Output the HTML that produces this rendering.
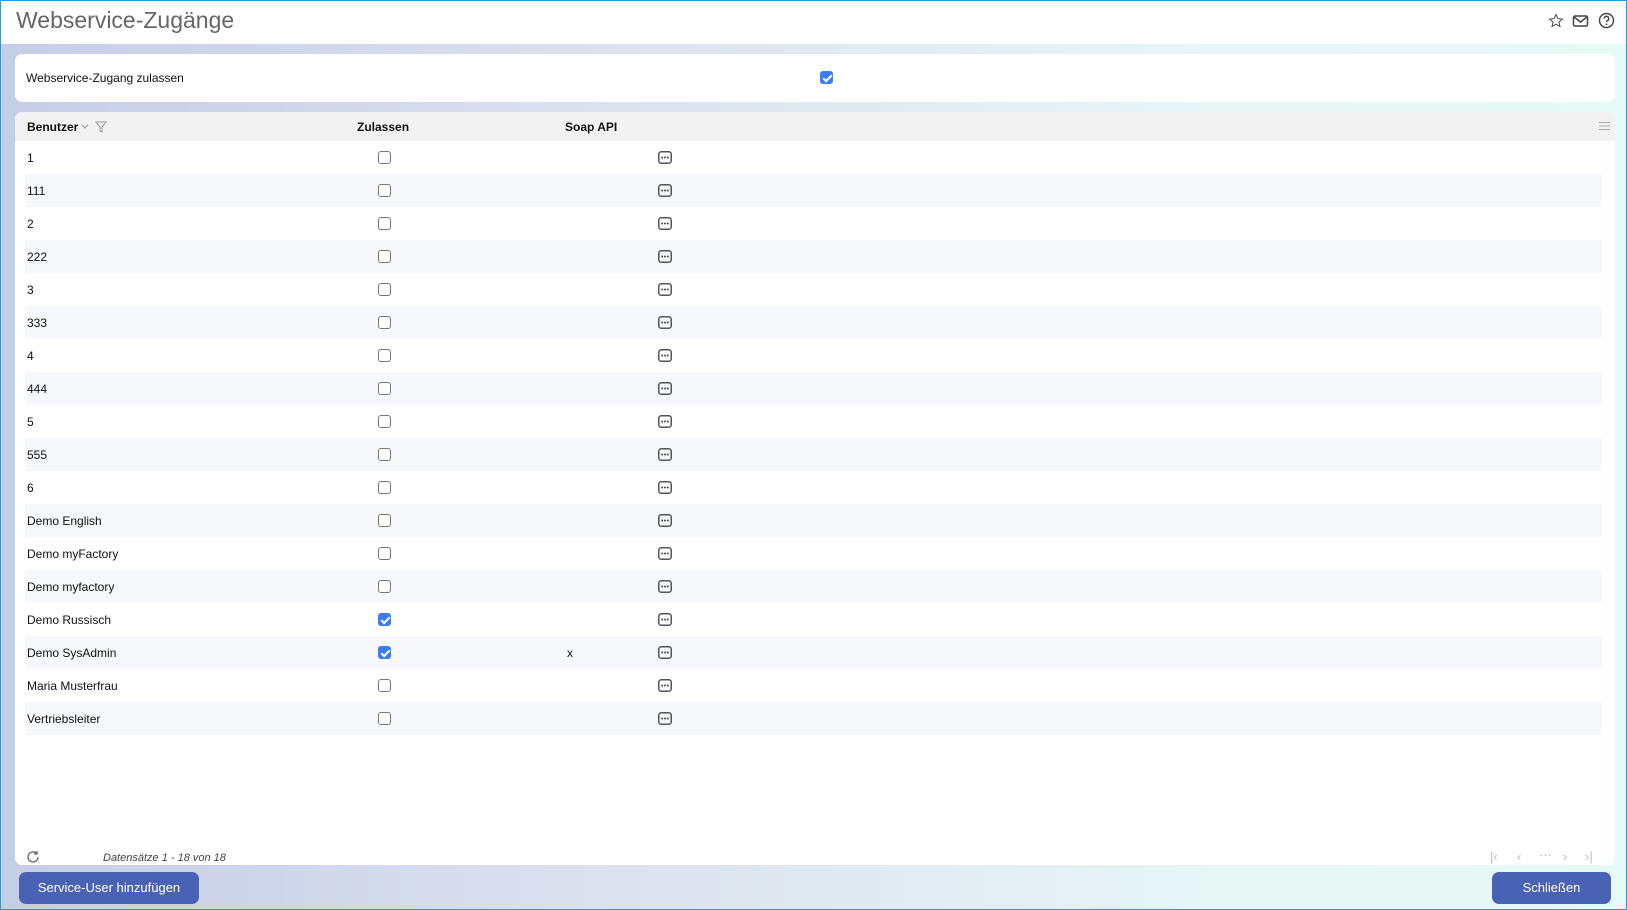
<!DOCTYPE html>
<html><head><meta charset="utf-8">
<style>
*{box-sizing:border-box;margin:0;padding:0}
body{width:1627px;height:910px;overflow:hidden;font-family:"Liberation Sans",sans-serif;color:#111;background:#fff}
.frame{position:absolute;left:0;top:0;width:1627px;height:910px;border:1px solid #1ea0e0;overflow:hidden}
.hdr{position:absolute;left:0;top:0;width:100%;height:43px;background:#fff}
.title{position:absolute;left:15px;top:6px;font-size:23px;color:#666}
.bg{position:absolute;left:0;top:43px;width:100%;height:867px;background:linear-gradient(90deg,#c6cde6 0%,#dde3ef 40%,#e8f6f6 75%,#e6faf6 100%)}
.card1{position:absolute;left:14px;top:53px;width:1600px;height:48px;background:#fff;border-radius:7px}
.card1 .lbl{position:absolute;left:11px;top:17px;font-size:12px}
.grid{position:absolute;left:14px;top:111px;width:1600px;height:753px;background:#fff;border-radius:7px;overflow:hidden}
.gh{position:absolute;left:0;top:0;width:100%;height:29px;background:#f2f2f2;font-weight:bold;font-size:12px}
.gh span{position:absolute;top:8px}
.row{position:absolute;left:10px;width:1577px;height:33px;font-size:12px}
.row.alt{background:#f7f8fb}
.row .n{position:absolute;left:2px;top:10px}
.cb{position:absolute;left:353px;top:10px;width:13px;height:13px;border:1px solid #767676;border-radius:3px;background:#fff}
.cb.on{background:#3b7cf0;border-color:#3b7cf0}
.cb.on:after{content:"";position:absolute;left:3.5px;top:1px;width:3px;height:7px;border:solid #fff;border-width:0 2px 2px 0;transform:rotate(45deg)}
.ic{position:absolute;left:633px;top:10px;width:14px;height:13px}
.x{position:absolute;left:542px;top:10px}
.btn{position:absolute;top:871px;height:32px;background:#4a62b3;color:#fff;font-size:13px;border-radius:7px;text-align:center;line-height:32px}
</style></head><body>
<svg width="0" height="0" style="position:absolute"><defs><symbol id="d" viewBox="0 0 14 13"><rect x="0.75" y="0.75" width="12.5" height="11.5" rx="2.5" fill="none" stroke="#555" stroke-width="1.5"/><circle cx="4.2" cy="6.5" r="1" fill="#444"/><circle cx="7" cy="6.5" r="1" fill="#444"/><circle cx="9.8" cy="6.5" r="1" fill="#444"/></symbol></defs></svg>
<div class="frame">
<div class="hdr"><div class="title">Webservice-Zugänge</div>
<svg style="position:absolute;left:1547px;top:12px" width="16" height="16" viewBox="0 0 16 16"><path d="M8 1.5l1.9 4.1 4.4.5-3.3 3 .9 4.4L8 11.3l-3.9 2.2.9-4.4-3.3-3 4.4-.5z" fill="none" stroke="#555" stroke-width="1.1"/></svg>
<svg style="position:absolute;left:1571px;top:12px" width="17" height="16" viewBox="0 0 17 16"><rect x="1.5" y="3" width="14" height="10" rx="1.5" fill="none" stroke="#444" stroke-width="1.5"/><path d="M2 4l6.5 5L15 4" fill="none" stroke="#444" stroke-width="1.5"/></svg>
<svg style="position:absolute;left:1597px;top:11px" width="17" height="17" viewBox="0 0 17 17"><circle cx="8.5" cy="8.5" r="7" fill="none" stroke="#444" stroke-width="1.4"/><path d="M6.3 6.6a2.2 2.2 0 1 1 3 2c-.6.3-.8.7-.8 1.4" fill="none" stroke="#444" stroke-width="1.4"/><circle cx="8.5" cy="12.3" r=".9" fill="#444"/></svg>
</div>
<div class="bg"></div>
<div class="card1"><div class="lbl">Webservice-Zugang zulassen</div><div class="cb on" style="left:805px;top:17px"></div></div>
<div class="grid">
<div class="gh"><span style="left:12px">Benutzer</span>
<svg style="position:absolute;left:66px;top:12px" width="8" height="6" viewBox="0 0 8 6"><path d="M1 1l3 3 3-3" fill="none" stroke="#999"/></svg>
<svg style="position:absolute;left:80px;top:9px" width="12" height="12" viewBox="0 0 12 12"><path d="M1 1h10L7 6v5L5 10V6z" fill="none" stroke="#999"/></svg>
<span style="left:342px">Zulassen</span><span style="left:550px">Soap API</span>
<svg style="position:absolute;left:1584px;top:9px" width="11" height="10" viewBox="0 0 11 10"><path d="M0 1.5h11M0 5h11M0 8.5h11" stroke="#aaa"/></svg>
</div>
<div class="row" style="top:29px"><span class="n">1</span><div class="cb"></div><svg class="ic"><use href="#d"/></svg></div>
<div class="row alt" style="top:62px"><span class="n">111</span><div class="cb"></div><svg class="ic"><use href="#d"/></svg></div>
<div class="row" style="top:95px"><span class="n">2</span><div class="cb"></div><svg class="ic"><use href="#d"/></svg></div>
<div class="row alt" style="top:128px"><span class="n">222</span><div class="cb"></div><svg class="ic"><use href="#d"/></svg></div>
<div class="row" style="top:161px"><span class="n">3</span><div class="cb"></div><svg class="ic"><use href="#d"/></svg></div>
<div class="row alt" style="top:194px"><span class="n">333</span><div class="cb"></div><svg class="ic"><use href="#d"/></svg></div>
<div class="row" style="top:227px"><span class="n">4</span><div class="cb"></div><svg class="ic"><use href="#d"/></svg></div>
<div class="row alt" style="top:260px"><span class="n">444</span><div class="cb"></div><svg class="ic"><use href="#d"/></svg></div>
<div class="row" style="top:293px"><span class="n">5</span><div class="cb"></div><svg class="ic"><use href="#d"/></svg></div>
<div class="row alt" style="top:326px"><span class="n">555</span><div class="cb"></div><svg class="ic"><use href="#d"/></svg></div>
<div class="row" style="top:359px"><span class="n">6</span><div class="cb"></div><svg class="ic"><use href="#d"/></svg></div>
<div class="row alt" style="top:392px"><span class="n">Demo English</span><div class="cb"></div><svg class="ic"><use href="#d"/></svg></div>
<div class="row" style="top:425px"><span class="n">Demo myFactory</span><div class="cb"></div><svg class="ic"><use href="#d"/></svg></div>
<div class="row alt" style="top:458px"><span class="n">Demo myfactory</span><div class="cb"></div><svg class="ic"><use href="#d"/></svg></div>
<div class="row" style="top:491px"><span class="n">Demo Russisch</span><div class="cb on"></div><svg class="ic"><use href="#d"/></svg></div>
<div class="row alt" style="top:524px"><span class="n">Demo SysAdmin</span><div class="cb on"></div><span class="x">x</span><svg class="ic"><use href="#d"/></svg></div>
<div class="row" style="top:557px"><span class="n">Maria Musterfrau</span><div class="cb"></div><svg class="ic"><use href="#d"/></svg></div>
<div class="row alt" style="top:590px"><span class="n">Vertriebsleiter</span><div class="cb"></div><svg class="ic"><use href="#d"/></svg></div>
<svg style="position:absolute;left:11px;top:738px" width="14" height="14" viewBox="0 0 14 14"><path d="M12 7a5 5 0 1 1-1.5-3.6" fill="none" stroke="#666" stroke-width="1.3"/><path d="M11 1v3H8" fill="none" stroke="#666" stroke-width="1.3"/></svg>
<div style="position:absolute;left:88px;top:740px;font-size:11px;font-style:italic;color:#444">Datensätze 1 - 18 von 18</div>
<div style="position:absolute;left:1475px;top:737px;font-size:13px;color:#bbb;width:120px">
<span style="position:absolute;left:0">|&#x2039;</span><span style="position:absolute;left:27px">&#x2039;</span><span style="position:absolute;left:49px;top:-2px">···</span><span style="position:absolute;left:73px">&#x203A;</span><span style="position:absolute;left:95px">&#x203A;|</span></div>
</div>
<div class="btn" style="left:18px;width:180px">Service-User hinzufügen</div>
<div class="btn" style="left:1491px;width:119px">Schließen</div>
</div>
</body></html>
